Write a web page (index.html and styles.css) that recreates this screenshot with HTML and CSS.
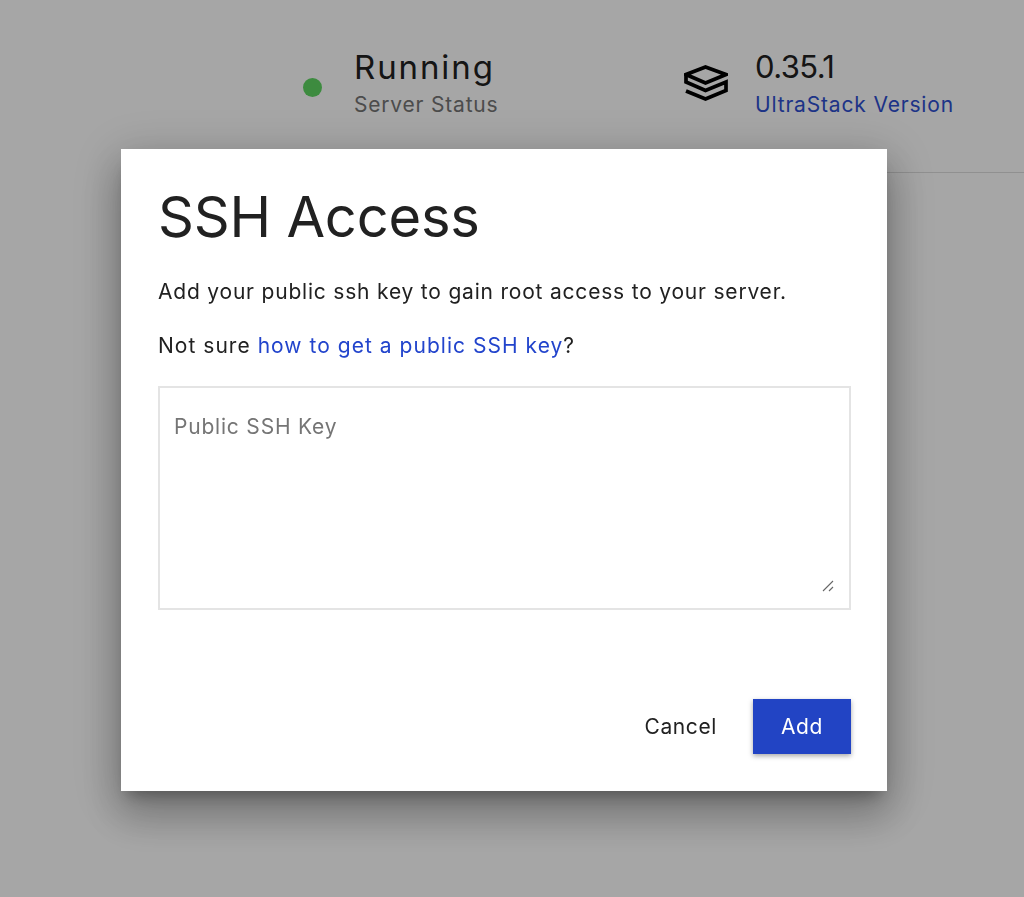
FILE: index.html
```html
<!DOCTYPE html>
<html lang="en">
<head>
    <meta charset="UTF-8">
    <meta name="viewport" content="width=device-width, initial-scale=1.0">
    <title>SSH Access</title>
    <link rel="stylesheet" href="styles.css">
</head>
<body>
    <header class="status-bar">
        <div class="stat stat-server">
            <span class="status-dot"></span>
            <div class="stat-text">
                <div class="stat-value">Running</div>
                <div class="stat-label">Server Status</div>
            </div>
        </div>
        <div class="stat stat-version">
            <svg class="stack-icon" viewBox="0 0 44 36" width="44" height="36" fill="none" stroke="#000" stroke-width="3.7">
                <path d="M21.5 2 L42 9.5 L21.5 18 L2 9.5 Z"/>
                <path d="M2 9.5 V17 L21.5 25.5 L42 17 V25.5 L21.5 34 L2 26"/>
            </svg>
            <div class="stat-text">
                <div class="stat-value version-number">0.35.1</div>
                <a class="stat-link" href="#">UltraStack Version</a>
            </div>
        </div>
    </header>
    <div class="divider"></div>

    <div class="overlay"></div>

    <div class="modal">
        <h2>SSH Access</h2>
        <p>Add your public ssh key to gain root access to your server.</p>
        <p class="help-text">Not sure <a href="#">how to get a public SSH key</a>?</p>
        <div class="key-field">
            <textarea placeholder="Public SSH Key"></textarea>
            <svg class="resize-grip" viewBox="0 0 12 12" width="12" height="12" stroke="#666" stroke-width="1.1">
                <path d="M1 11 L11 1"/>
                <path d="M7 11 L11 7"/>
            </svg>
        </div>
        <div class="modal-actions">
            <button class="cancel-button">Cancel</button>
            <button class="add-button">Add</button>
        </div>
    </div>
</body>
</html>
```

FILE: styles.css
```css
body {
    font-family: Inter, "Liberation Sans", sans-serif;
    background-color: #fff;
    color: #212121;
    margin: 0;
    height: 897px;
    overflow: hidden;
}
.status-bar {
    display: flex;
    padding: 45px 0 0 303px;
    height: 172px;
    box-sizing: border-box;
}
.stat {
    display: flex;
    align-items: center;
    height: 76px;
}
.stat-server {
    width: 381px;
}
.status-dot {
    width: 19px;
    height: 19px;
    border-radius: 50%;
    background-color: #5ed662;
    margin: 8px 32px 0 0;
}
.stack-icon {
    margin-right: 27px;
}
.stat-value {
    font-size: 33px;
    line-height: 44px;
    letter-spacing: 1.9px;
}
.version-number {
    font-size: 31px;
    letter-spacing: -0.6px;
}
.stat-label, .stat-link {
    font-size: 21px;
    line-height: 32px;
    letter-spacing: 0.8px;
    color: #757575;
    display: block;
}
.stat-link {
    color: #2e4fd0;
    letter-spacing: 0.83px;
    text-decoration: none;
}
.divider {
    margin-left: 887px;
    height: 1px;
    background-color: #ddd;
}
.overlay {
    position: fixed;
    top: 0;
    left: 0;
    right: 0;
    bottom: 0;
    background-color: rgba(0, 0, 0, 0.35);
}
.modal {
    position: fixed;
    top: 149px;
    left: 121px;
    width: 766px;
    height: 642px;
    box-sizing: border-box;
    padding: 32px 36px 37px 37px;
    background-color: #fff;
    box-shadow: 0 11px 15px -7px rgba(0, 0, 0, 0.3), 0 24px 38px 3px rgba(0, 0, 0, 0.2), 0 9px 46px 8px rgba(0, 0, 0, 0.16);
    display: flex;
    flex-direction: column;
}
.modal h2 {
    font-size: 56px;
    font-weight: 400;
    line-height: 72px;
    letter-spacing: -0.2px;
    margin: 0 0 25px;
}
.modal p {
    font-size: 21px;
    line-height: 28px;
    letter-spacing: 0.8px;
    margin: 0 0 26px;
}
.modal .help-text {
    letter-spacing: 1.03px;
}
.modal a {
    color: #2244cc;
    text-decoration: none;
}
.key-field {
    position: relative;
}
.key-field textarea {
    display: block;
    width: 100%;
    height: 224px;
    box-sizing: border-box;
    padding: 26px 14px;
    border: 2px solid #e4e4e4;
    border-radius: 0;
    font-family: inherit;
    font-size: 21px;
    letter-spacing: 0.8px;
    outline: none;
    resize: none;
}
.key-field textarea::placeholder {
    color: #757575;
}
.resize-grip {
    position: absolute;
    right: 17px;
    bottom: 18px;
}
.modal-actions {
    display: flex;
    justify-content: flex-end;
    align-items: center;
    margin-top: auto;
}
.cancel-button, .add-button {
    font-family: inherit;
    font-size: 21px;
    letter-spacing: 0.6px;
    border: none;
    height: 55px;
    cursor: pointer;
}
.cancel-button {
    background: none;
    color: #212121;
    padding: 0;
    margin-right: 36px;
}
.add-button {
    width: 98px;
    background-color: #2244c4;
    color: #fff;
    box-shadow: 0 2px 5px rgba(0, 0, 0, 0.35);
}
```
